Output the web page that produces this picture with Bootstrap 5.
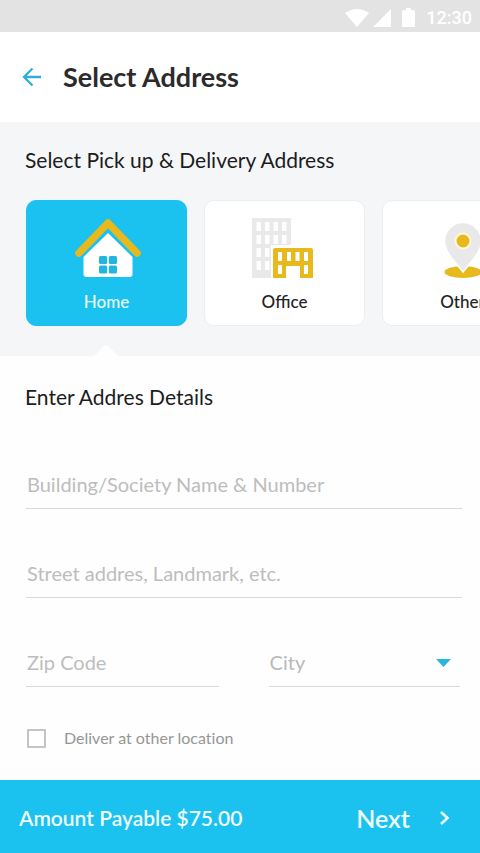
<!DOCTYPE html>
<html lang="en">
<head>
<meta charset="utf-8">
<meta name="viewport" content="width=device-width, initial-scale=1">
<title>Select Address</title>
<link href="https://cdn.jsdelivr.net/npm/bootstrap@5.3.0/dist/css/bootstrap.min.css" rel="stylesheet">
<style>
  :root { --sky: #1bc1ef; --gold: #e8b91c; --pale: #e9e9e9; }
  body { font-family: Lato, "Open Sans", sans-serif; color: #1c1c1c; background: #fefefe; }
  svg { display: block; flex: none; }
  .status-strip { height: 32px; padding: 3px 8px 0; gap: 9px; background: #e3e3e3; font: 500 18px/28px Roboto, sans-serif; color: #fff; }
  .top-bar { height: 90px; padding: 0 22px; gap: 21px; }
  .top-bar h1 { font-size: 27px; line-height: 32px; font-weight: 700; color: #2b2b2d; }
  .place-area { background: #f5f6f8; padding-top: 25px; }
  .heading { font-size: 21px; line-height: 26px; font-weight: 400; margin: 0 25px; }
  .place-list { gap: 17px; padding: 27px 26px 30px; overflow-x: auto; scrollbar-width: none; }
  .place-list::-webkit-scrollbar { display: none; }
  .place { flex: 0 0 161px; height: 126px; border: 1px solid #eceef0; border-radius: 10px; background: #fff; color: #222; padding: 15px 0 0; gap: 10px; font-size: 17px; line-height: 24px; font-weight: 500; }
  .place.chosen { background: var(--sky); border-color: var(--sky); color: #e6fbff; }
  .pointer { left: 94px; bottom: 0; }
  .details { padding-top: 28px; }
  .fields { padding: 49px 18px 0 26px; gap: 39px; }
  .line-input { height: 50px; border: 0; border-bottom: 1px solid #d9d9d9; border-radius: 0; background: transparent; padding: 0 1px; font-size: 20px; color: #b9b9b9; }
  .line-input::placeholder { color: #bdbdbd; }
  .line-input:focus { box-shadow: none; background: transparent; border-color: var(--sky); }
  select.line-input { appearance: none; background-image: none; }
  .pair { gap: 50px; padding-right: 2px; }
  .arrow { right: 9px; top: 22px; pointer-events: none; }
  .other-location { padding: 39px 27px 28px; gap: 18px; font-size: 16px; line-height: 24px; color: #969696; font-variant-ligatures: none; }
  .other-location .form-check-input { width: 19px; height: 19px; border: 2px solid #c4c4c4; border-radius: 1px; flex: none; }
  .pay-bar { min-height: 73px; background: var(--sky); color: #effcff; padding: 3px 28px 0 19px; font-size: 21px; font-weight: 600; }
  .next-btn { color: inherit; gap: 28px; font-size: 25px; line-height: 32px; font-weight: 600; }
</style>
</head>
<body class="min-vh-100 d-flex flex-column">
  <div class="status-strip d-flex justify-content-end align-items-center">
    <svg width="72" height="22" viewBox="0 0 72 22" fill="#fff" aria-hidden="true">
      <path d="M0 6Q12-2 24 6L12 20Z"/>
      <path d="M46 2v18H28Z"/>
      <path d="M59 3h2V1h5v2h2q2 0 2 2v15H57V5q0-2 2-2Z"/>
    </svg>
    <span>12:30</span>
  </div>

  <header class="top-bar d-flex align-items-center bg-white">
    <a href="#" aria-label="Back">
      <svg width="20" height="20" viewBox="0 0 20 20" fill="none" stroke="#2eaedc" stroke-width="2.3"><path d="M19 10H2.500M10.500 1.500 2 10l8.500 8.500"/></svg>
    </a>
    <h1 class="mb-0">Select Address</h1>
  </header>

  <main class="flex-grow-1">
    <section class="place-area position-relative">
      <h2 class="heading">Select Pick up &amp; Delivery Address</h2>
      <div class="place-list d-flex">
        <button type="button" class="place chosen d-flex flex-column align-items-center" aria-pressed="true">
          <svg width="68" height="64" viewBox="0 0 68 64" aria-hidden="true">
            <path d="M35 17 59.500 41v17q0 3-3 3h-43q-3 0-3-3V41Z" fill="#fff"/>
            <path d="M6 37 35 7l29 30" fill="none" stroke="#e8b91c" stroke-width="7.500" stroke-linecap="round" stroke-linejoin="round"/>
            <g fill="#22b5df"><rect x="26" y="40" width="8.200" height="8" rx="1.500"/><rect x="35.800" y="40" width="8.200" height="8" rx="1.500"/><rect x="26" y="49.500" width="8.200" height="8" rx="1.500"/><rect x="35.800" y="49.500" width="8.200" height="8" rx="1.500"/></g>
          </svg>
          <span>Home</span>
        </button>
        <button type="button" class="place d-flex flex-column align-items-center" aria-pressed="false">
          <svg width="70" height="64" viewBox="0 0 70 64" aria-hidden="true">
            <path d="M2 2h39v27H21v33H2Z" fill="#e9e9e9"/>
            <g fill="#fff">
              <path d="M6.500 6h4.500v9H6.500zM15 6h4.500v9H15zM23.500 6H28v9h-4.500zM32 6h4.500v9H32z"/>
              <path d="M6.500 19h4.500v9H6.500zM15 19h4.500v9H15zM23.500 19H28v9h-4.500zM32 19h4.500v9H32z"/>
              <path d="M6.500 32h4.500v9H6.500zM15 32h4.500v9H15zM6.500 45h4.500v9H6.500zM15 45h4.500v9H15z"/>
            </g>
            <path d="M25 32h36q2 0 2 2v28H50V50H36v12H23V34q0-2 2-2Z" fill="#e8b91c"/>
            <path d="M28 36h4v9h-4zM37 36h4v9h-4zM45.500 36h4v9h-4zM54 36h4v9h-4zM28 49h4v9h-4zM54 49h4v9h-4z" fill="#fff"/>
          </svg>
          <span>Office</span>
        </button>
        <button type="button" class="place d-flex flex-column align-items-center" aria-pressed="false">
          <svg width="40" height="64" viewBox="0 0 40 64" aria-hidden="true">
            <ellipse cx="20" cy="56" rx="18.500" ry="6" fill="#e8b91c"/>
            <path d="M20 56C15 49 1.500 37 1.500 25a18.500 18.500 0 0 1 37 0C38.500 37 25 49 20 56Z" fill="#e9e9e9" stroke="#fff" stroke-width="1.500"/>
            <circle cx="20" cy="25" r="7.500" fill="#e8b91c" stroke="#fff8dc" stroke-width="2"/>
          </svg>
          <span>Other</span>
        </button>
      </div>
      <svg class="pointer position-absolute" width="24" height="12" viewBox="0 0 24 12" aria-hidden="true"><path d="M0 12 10 2q2-2 4 0l10 10Z" fill="#fefefe"/></svg>
    </section>

    <form class="details">
      <h2 class="heading">Enter Addres Details</h2>
      <div class="fields d-flex flex-column">
        <input class="form-control line-input" type="text" placeholder="Building/Society Name &amp; Number" aria-label="Building/Society Name &amp; Number">
        <input class="form-control line-input" type="text" placeholder="Street addres, Landmark, etc." aria-label="Street addres, Landmark, etc.">
        <div class="pair d-flex">
          <input class="form-control line-input" type="text" placeholder="Zip Code" aria-label="Zip Code">
          <div class="position-relative w-100">
            <select class="form-select line-input" aria-label="City"><option>City</option></select>
            <svg class="arrow position-absolute" width="15" height="8" viewBox="0 0 15 8" aria-hidden="true"><path d="M0 0h15L7.500 8Z" fill="#29b6dd"/></svg>
          </div>
        </div>
      </div>
      <div class="other-location d-flex align-items-center">
        <input class="form-check-input m-0" type="checkbox" id="otherLocation">
        <label for="otherLocation">Deliver at other location</label>
      </div>
    </form>
  </main>

  <footer class="pay-bar d-flex align-items-center justify-content-between">
    <span>Amount Payable $75.00</span>
    <button type="button" class="next-btn btn border-0 p-0 d-flex align-items-center">
      Next
      <svg width="14" height="16" viewBox="0 0 14 16" fill="none" stroke="currentColor" stroke-width="2.500" aria-hidden="true"><path d="m3 2 6.500 6L3 14"/></svg>
    </button>
  </footer>
<script src="https://cdn.jsdelivr.net/npm/bootstrap@5.3.0/dist/js/bootstrap.bundle.min.js"></script>
</body>
</html>
